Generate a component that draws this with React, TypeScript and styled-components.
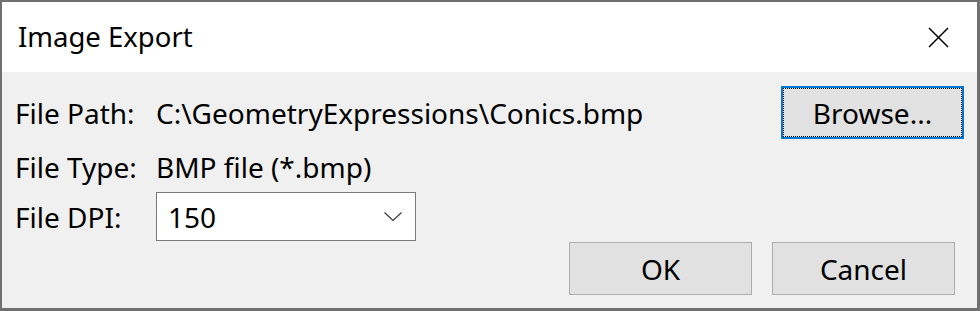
import styled, { createGlobalStyle } from 'styled-components';

const GlobalStyle = createGlobalStyle`
	html, body {
		margin: 0;
		padding: 0;
		background: #ffffff;
	}
	* {
		box-sizing: border-box;
	}
`;

const StyledWindow = styled.div`
	width: 980px;
	height: 311px;
	display: flex;
	flex-direction: column;
	border-style: solid;
	border-color: #707070;
	border-width: 2px 3px 3px 2px;
	font-family: 'Segoe UI', 'Noto Sans', 'Open Sans', sans-serif;
	font-size: 28px;
	color: #000000;
	background: #f0f0f0;
`;

const StyledTitleBar = styled.div`
	height: 70px;
	flex-shrink: 0;
	display: flex;
	align-items: center;
	justify-content: space-between;
	padding: 0 28px 0 16px;
	background: #ffffff;
`;

const StyledTitle = styled.span`
	font-size: 27.5px;
	line-height: 1;
`;

const StyledClose = styled.button`
	width: 21px;
	height: 21px;
	padding: 0;
	border: none;
	background: transparent;
	display: flex;
`;

const StyledBody = styled.div`
	flex: 1;
	display: flex;
	flex-direction: column;
	padding: 14px 13px 0 13px;
`;

const StyledRow = styled.div<{ $height: number; $gap: number }>`
	display: flex;
	align-items: center;
	height: ${({ $height }) => $height}px;
	margin-top: ${({ $gap }) => $gap}px;
`;

const StyledLabel = styled.span`
	width: 141px;
	flex-shrink: 0;
	line-height: 1;
`;

const StyledValue = styled.span`
	flex: 1;
	line-height: 1;
	white-space: nowrap;
`;

const StyledButton = styled.button<{ $focused?: boolean }>`
	position: relative;
	width: 183px;
	height: 53px;
	flex-shrink: 0;
	font: inherit;
	color: #000000;
	background: #e1e1e1;
	border: ${({ $focused }) => ($focused ? '2px solid #0078d7' : '1px solid #adadad')};
	padding: 0;
	line-height: 1;

	${({ $focused }) =>
		$focused &&
		`&::after {
			content: '';
			position: absolute;
			inset: 0;
			border: 1px dotted #000000;
		}`}
`;

const StyledSelect = styled.div`
	width: 260px;
	height: 49px;
	display: flex;
	align-items: center;
	justify-content: space-between;
	padding: 0 13px 0 11px;
	background: #ffffff;
	border: 1px solid #7a7a7a;
	line-height: 1;
`;

const StyledFooter = styled.div`
	display: flex;
	justify-content: flex-end;
	gap: 20px;
	margin-top: 1px;
	padding-right: 9px;
`;

const CloseIcon = () => (
	<svg width="21" height="21" viewBox="0 0 21 21">
		<path d="M1 1L20 20M20 1L1 20" stroke="#000000" strokeWidth="1.5" fill="none" />
	</svg>
);

const ChevronIcon = () => (
	<svg width="18" height="9" viewBox="0 0 18 9">
		<path d="M0.5 0.5L9 8.5L17.5 0.5" stroke="#333333" strokeWidth="1.1" fill="none" />
	</svg>
);

const App = () => {
	return (
		<>
			<GlobalStyle />
			<StyledWindow>
				<StyledTitleBar>
					<StyledTitle>Image Export</StyledTitle>
					<StyledClose aria-label="Close">
						<CloseIcon />
					</StyledClose>
				</StyledTitleBar>
				<StyledBody>
					<StyledRow $height={53} $gap={0}>
						<StyledLabel>File Path:</StyledLabel>
						<StyledValue>C:\GeometryExpressions\Conics.bmp</StyledValue>
						<StyledButton $focused>Browse...</StyledButton>
					</StyledRow>
					<StyledRow $height={40} $gap={8}>
						<StyledLabel>File Type:</StyledLabel>
						<StyledValue>BMP file (*.bmp)</StyledValue>
					</StyledRow>
					<StyledRow $height={49} $gap={5}>
						<StyledLabel>File DPI:</StyledLabel>
						<StyledSelect>
							<span>150</span>
							<ChevronIcon />
						</StyledSelect>
					</StyledRow>
					<StyledFooter>
						<StyledButton>OK</StyledButton>
						<StyledButton>Cancel</StyledButton>
					</StyledFooter>
				</StyledBody>
			</StyledWindow>
		</>
	);
};

export default App;
